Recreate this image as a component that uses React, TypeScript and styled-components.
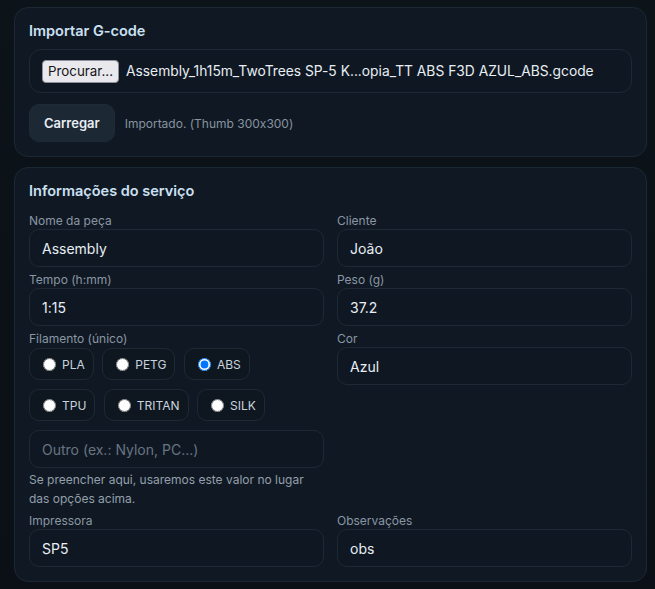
import React from "react";
import styled, { createGlobalStyle } from "styled-components";

const GlobalStyle = createGlobalStyle`
  html, body {
    margin: 0;
    padding: 0;
    background: #0b1117;
  }
  body {
    font-family: Inter, "Noto Sans", "Liberation Sans", sans-serif;
    font-feature-settings: "calt" 0;
    color: #e6edf3;
  }
  * { box-sizing: border-box; }
`;

const Page = styled.div`
  display: flex;
  flex-direction: column;
  gap: 10px;
  padding: 7px 8px 8px 14px;
  min-height: 589px;
  background: linear-gradient(180deg, #0c1319 0%, #0a1015 100%);
`;

const Card = styled.section`
  background: #101923;
  border: 1px solid #1b2834;
  border-radius: 14px;
  padding: 14px;
`;

const CardTitle = styled.h2<{ $mb: number }>`
  margin: 0 0 ${(p) => p.$mb}px;
  font-size: 14.5px;
  line-height: 18px;
  font-weight: 600;
  color: #cce0f3;
`;

const FileBox = styled.div`
  display: flex;
  align-items: center;
  gap: 7px;
  height: 44px;
  padding: 0 12px;
  border: 1px solid #1d2a36;
  border-radius: 12px;
  background: #0f1822;
  overflow: hidden;
`;

const BrowseButton = styled.span`
  display: inline-flex;
  align-items: center;
  height: 23px;
  padding: 0 5px;
  border: 1px solid #8f8f9d;
  border-radius: 4px;
  background: #e9e9ed;
  color: #15141a;
  font-size: 13.33px;
  white-space: nowrap;
`;

const FileName = styled.span`
  font-size: 13.8px;
  color: #e8eef4;
  white-space: nowrap;
`;

const ActionRow = styled.div`
  display: flex;
  align-items: center;
  gap: 10px;
  margin-top: 11px;
`;

const PrimaryButton = styled.button`
  height: 38px;
  padding: 0 14px;
  border: 1px solid #1e2a36;
  border-radius: 10px;
  background: #1c2833;
  color: #e8eef4;
  font-family: inherit;
  font-size: 13px;
  font-weight: 600;
`;

const Status = styled.span`
  font-size: 12px;
  color: #8693a0;
`;

const FormGrid = styled.div`
  display: grid;
  grid-template-columns: 1fr 1fr;
  column-gap: 13px;
  row-gap: 5px;
  align-items: start;
`;

const Field = styled.div`
  display: flex;
  flex-direction: column;
  min-width: 0;
`;

const Label = styled.label`
  display: block;
  font-size: 12px;
  line-height: 16px;
  color: #8a96a3;
`;

const TextInput = styled.input<{ $mt?: number }>`
  width: 100%;
  height: 38px;
  margin-top: ${(p) => p.$mt ?? 0}px;
  padding: 0 12px;
  border: 1px solid #1d2a36;
  border-radius: 10px;
  background: #0f1822;
  color: #e8eef4;
  font-family: inherit;
  font-feature-settings: "calt" 0;
  font-size: 14px;
  outline: none;
  &::placeholder {
    color: #687482;
  }
`;

const RadioGroup = styled.div`
  display: flex;
  flex-wrap: wrap;
  gap: 9px 8.5px;
  margin-top: 1px;
`;

const Pill = styled.label`
  display: inline-flex;
  align-items: center;
  gap: 6px;
  height: 32px;
  padding: 0 8px 0 13px;
  border: 1px solid #1d2a36;
  border-radius: 10px;
  background: #0e1720;
  font-size: 12px;
  color: #c9d3dd;
`;

const Radio = styled.input`
  width: 13px;
  height: 13px;
  margin: 0;
`;

const Help = styled.p`
  margin: 2px 0 0;
  font-size: 12px;
  line-height: 19px;
  color: #939fab;
`;

const filaments = ["PLA", "PETG", "ABS", "TPU", "TRITAN", "SILK"];

export default function App() {
  return (
    <>
      <GlobalStyle />
      <Page>
        <Card>
          <CardTitle $mb={9}>Importar G-code</CardTitle>
          <FileBox>
            <BrowseButton>Procurar...</BrowseButton>
            <FileName>Assembly_1h15m_TwoTrees SP-5 K...opia_TT ABS F3D AZUL_ABS.gcode</FileName>
          </FileBox>
          <ActionRow>
            <PrimaryButton type="button">Carregar</PrimaryButton>
            <Status>Importado. (Thumb 300x300)</Status>
          </ActionRow>
        </Card>
        <Card>
          <CardTitle $mb={13}>Informações do serviço</CardTitle>
          <FormGrid>
            <Field>
              <Label>Nome da peça</Label>
              <TextInput defaultValue="Assembly" />
            </Field>
            <Field>
              <Label>Cliente</Label>
              <TextInput defaultValue="João" />
            </Field>
            <Field>
              <Label>Tempo (h:mm)</Label>
              <TextInput defaultValue="1:15" />
            </Field>
            <Field>
              <Label>Peso (g)</Label>
              <TextInput defaultValue="37.2" />
            </Field>
            <Field>
              <Label>Filamento (único)</Label>
              <RadioGroup>
                {filaments.map((f) => (
                  <Pill key={f}>
                    <Radio type="radio" name="fil" defaultChecked={f === "ABS"} />
                    {f}
                  </Pill>
                ))}
              </RadioGroup>
              <TextInput $mt={9} placeholder="Outro (ex.: Nylon, PC...)" />
              <Help>Se preencher aqui, usaremos este valor no lugar das opções acima.</Help>
            </Field>
            <Field>
              <Label>Cor</Label>
              <TextInput defaultValue="Azul" />
            </Field>
            <Field>
              <Label>Impressora</Label>
              <TextInput defaultValue="SP5" />
            </Field>
            <Field>
              <Label>Observações</Label>
              <TextInput defaultValue="obs" />
            </Field>
          </FormGrid>
        </Card>
      </Page>
    </>
  );
}
